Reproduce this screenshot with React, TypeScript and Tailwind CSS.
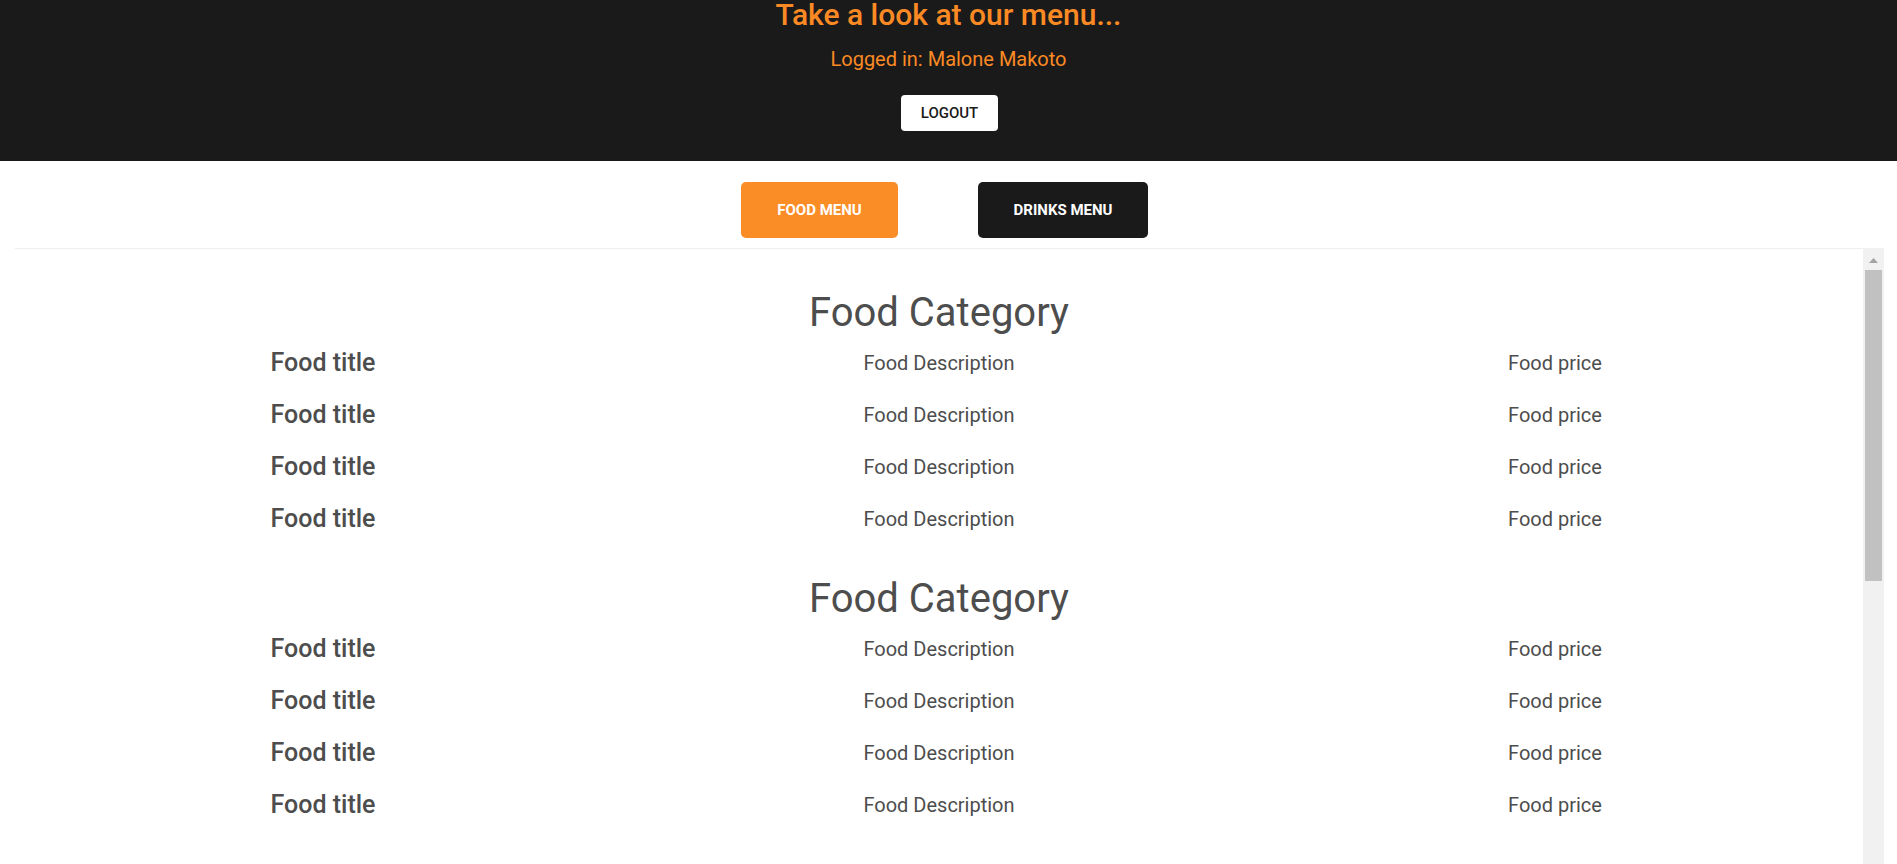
import React from 'react'

type Item = { title: string; description: string; price: string }
type Category = { name: string; items: Item[] }

const item: Item = { title: 'Food title', description: 'Food Description', price: 'Food price' }

const categories: Category[] = [
  { name: 'Food Category', items: [item, item, item, item] },
  { name: 'Food Category', items: [item, item, item, item] },
  { name: 'Food Category', items: [item, item, item, item] },
]

function MenuRow({ row }: { row: Item }) {
  return (
    <div className="grid grid-cols-3 h-[52px] items-center text-center">
      <span className="text-[25px] leading-[36px] font-medium text-[#4d4d4d]">{row.title}</span>
      <span className="text-[20px] leading-[28px] text-[#4d4d4d]">{row.description}</span>
      <span className="text-[20px] leading-[28px] text-[#4d4d4d]">{row.price}</span>
    </div>
  )
}

function FakeScrollbar() {
  return (
    <div className="w-[21px] shrink-0 bg-[#f1f1f1] flex flex-col items-center pt-[10px]">
      <svg width="9" height="5" viewBox="0 0 9 5">
        <path d="M4.5 0 L9 5 L0 5 Z" fill="#a3a3a3" />
      </svg>
      <div className="mt-[7px] w-[17px] h-[311px] bg-[#c1c1c1]" />
    </div>
  )
}

export default function App() {
  return (
    <div className="h-screen overflow-hidden flex flex-col bg-white font-['Roboto',sans-serif]">
      {/* Header */}
      <header className="h-[161px] shrink-0 bg-[#1a1a1a] flex flex-col items-center">
        <h1 className="text-[30px] leading-[30px] font-medium text-[#fb8a24]">Take a look at our menu...</h1>
        <p className="mt-[15px] text-[20px] leading-[28px] text-[#fb8a24]">Logged in: Malone Makoto</p>
        <button className="mt-[22px] ml-[2px] h-[36px] w-[97px] rounded-[4px] bg-white text-[15px] font-medium text-[#1a1a1a]">
          LOGOUT
        </button>
      </header>

      {/* Menu switch */}
      <nav className="shrink-0 pt-[21px] pb-[10px] pr-[8px] flex justify-center gap-[80px]">
        <button className="h-[56px] w-[157px] rounded-[5px] bg-[#fb8d27] text-[15px] font-bold text-white">
          FOOD MENU
        </button>
        <button className="h-[56px] w-[170px] rounded-[5px] bg-[#1a1a1a] text-[15px] font-bold text-white">
          DRINKS MENU
        </button>
      </nav>

      {/* Menu list */}
      <div className="flex-1 min-h-0 flex ml-[15px] mr-[13px]">
        <main className="flex-1 overflow-hidden border-t border-[#eeeeee] pt-[40px] flex flex-col gap-[30px]">
          {categories.map((cat, i) => (
            <section key={i}>
              <h2 className="text-center text-[40px] leading-[48px] text-[#4d4d4d]">{cat.name}</h2>
              {cat.items.map((row, j) => (
                <MenuRow key={j} row={row} />
              ))}
            </section>
          ))}
        </main>
        <FakeScrollbar />
      </div>
    </div>
  )
}
